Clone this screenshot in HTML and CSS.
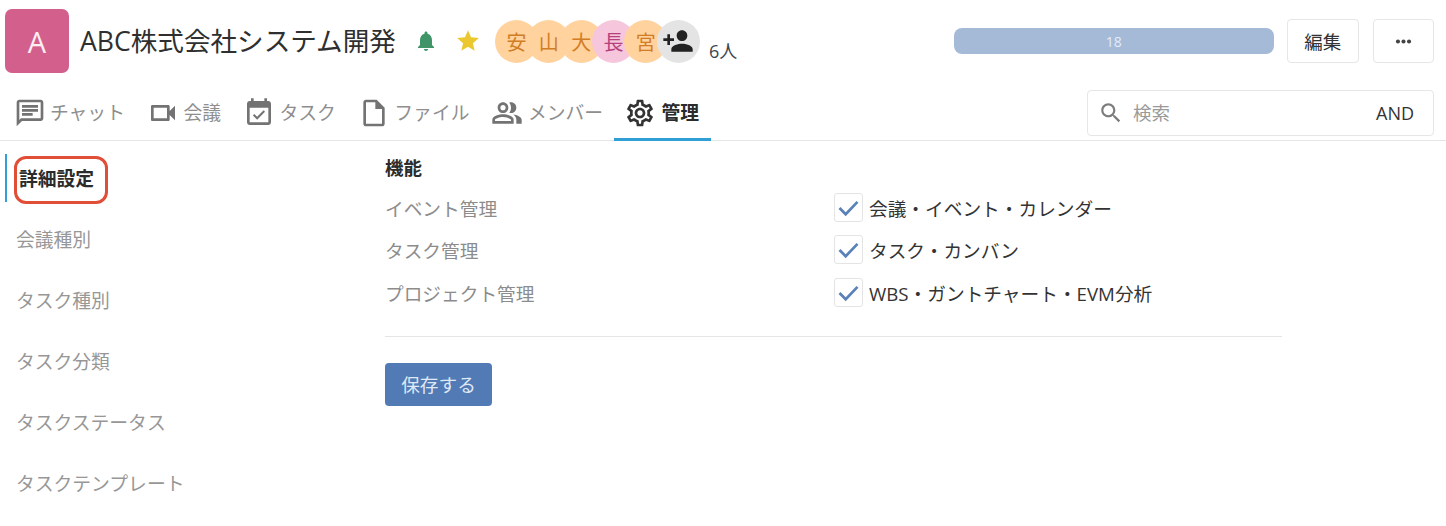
FILE: index.html
```html
<!DOCTYPE html>
<html lang="ja">
<head>
<meta charset="utf-8">
<title>ABC株式会社システム開発</title>
<link rel="stylesheet" href="styles.css">
</head>
<body>
<header class="head">
  <div class="logo">A</div>
  <h1 class="title">ABC株式会社システム開発</h1>
  <svg class="ic bell" viewBox="0 0 24 24"><path d="M12 22c1.1 0 2-.9 2-2h-4c0 1.1.89 2 2 2zm6-6v-5c0-3.07-1.64-5.64-4.5-6.32V4c0-.83-.67-1.5-1.5-1.5s-1.5.67-1.5 1.5v.68C7.63 5.36 6 7.92 6 11v5l-2 2v1h16v-1l-2-2z"/></svg>
  <svg class="ic star" viewBox="0 0 24 24"><path d="M12 17.27L18.18 21l-1.64-7.03L22 9.24l-7.19-.61L12 2 9.19 8.63 2 9.24l5.46 4.73L5.82 21z"/></svg>
  <div class="avatars">
    <span class="av orange">安</span>
    <span class="av orange">山</span>
    <span class="av orange">大</span>
    <span class="av pink">長</span>
    <span class="av orange">宮</span>
    <span class="av gray"><svg class="ic add" viewBox="0 0 24 24"><path d="M15 12c2.21 0 4-1.79 4-4s-1.79-4-4-4-4 1.79-4 4 1.79 4 4 4zm-9-2V7H4v3H1v2h3v3h2v-3h3v-2H6zm9 4c-2.67 0-8 1.34-8 4v2h16v-2c0-2.66-5.33-4-8-4z"/></svg></span>
  </div>
  <span class="count">6人</span>
  <div class="progress">18</div>
  <button class="btn edit">編集</button>
  <button class="btn more"><svg class="ic dots" viewBox="0 0 24 24"><circle cx="5" cy="12" r="2.6"/><circle cx="12" cy="12" r="2.6"/><circle cx="19" cy="12" r="2.6"/></svg></button>
</header>

<nav class="nav">
  <a class="tab"><svg class="ic" viewBox="0 0 24 24"><path d="M20 2H4c-1.1 0-2 .9-2 2v18l4-4h14c1.1 0 2-.9 2-2V4c0-1.1-.9-2-2-2zm0 14H5.17L4 17.17V4h16v12zM6 12h8v2H6zm0-3h12v2H6zm0-3h12v2H6z"/></svg><span>チャット</span></a>
  <a class="tab"><svg class="ic" viewBox="0 0 24 24"><path d="M15 8v8H5V8h10m1-2H4c-.55 0-1 .45-1 1v10c0 .55.45 1 1 1h12c.55 0 1-.45 1-1v-3.5l4 4v-11l-4 4V7c0-.55-.45-1-1-1z"/></svg><span>会議</span></a>
  <a class="tab"><svg class="ic" viewBox="0 0 24 24"><path d="M16.53 11.06L15.47 10l-4.88 4.88-2.12-2.12-1.06 1.06L10.59 17l5.94-5.94zM19 3h-1V1h-2v2H8V1H6v2H5c-1.11 0-1.99.9-1.99 2L3 19c0 1.1.89 2 2 2h14c1.1 0 2-.9 2-2V5c0-1.1-.9-2-2-2zm0 16H5V8h14v11z"/></svg><span>タスク</span></a>
  <a class="tab"><svg class="ic" viewBox="0 0 24 24"><path d="M14 2H6c-1.1 0-1.99.9-1.99 2L4 20c0 1.1.89 2 1.99 2H18c1.1 0 2-.9 2-2V8l-6-6zM6 20V4h7v5h5v11H6z"/></svg><span>ファイル</span></a>
  <a class="tab"><svg class="ic" viewBox="0 0 24 24"><path d="M16.67 13.13C18.04 14.06 19 15.32 19 17v3h4v-3c0-2.18-3.57-3.47-6.33-3.87zM15 12c2.21 0 4-1.79 4-4s-1.79-4-4-4c-.47 0-.91.1-1.33.24C14.5 5.27 15 6.58 15 8s-.5 2.73-1.33 3.76c.42.14.86.24 1.33.24zM9 12c2.21 0 4-1.79 4-4s-1.79-4-4-4-4 1.79-4 4 1.79 4 4 4zm0-6c1.1 0 2 .9 2 2s-.9 2-2 2-2-.9-2-2 .9-2 2-2zM9 13c-2.67 0-8 1.34-8 4v3h16v-3c0-2.66-5.33-4-8-4zm6 5H3v-.99C3.2 16.29 6.3 15 9 15s5.8 1.29 6 2z"/></svg><span>メンバー</span></a>
  <a class="tab active"><svg class="ic" viewBox="0 0 24 24"><path d="M19.43 12.98c.04-.32.07-.64.07-.98 0-.34-.03-.66-.07-.98l2.11-1.65c.19-.15.24-.42.12-.64l-2-3.46c-.09-.16-.26-.25-.44-.25-.06 0-.12.01-.17.03l-2.49 1c-.52-.4-1.08-.73-1.69-.98l-.38-2.65C14.46 2.18 14.25 2 14 2h-4c-.25 0-.46.18-.49.42l-.38 2.65c-.61.25-1.17.59-1.69.98l-2.49-1c-.06-.02-.12-.03-.18-.03-.17 0-.34.09-.43.25l-2 3.46c-.13.22-.07.49.12.64l2.11 1.65c-.04.32-.07.65-.07.98 0 .33.03.66.07.98l-2.11 1.65c-.19.15-.24.42-.12.64l2 3.46c.09.16.26.25.44.25.06 0 .12-.01.17-.03l2.49-1c.52.4 1.08.73 1.69.98l.38 2.65c.03.24.24.42.49.42h4c.25 0 .46-.18.49-.42l.38-2.65c.61-.25 1.17-.59 1.69-.98l2.49 1c.06.02.12.03.18.03.17 0 .34-.09.43-.25l2-3.46c.12-.22.07-.49-.12-.64l-2.11-1.65zm-1.98-1.71c.04.31.05.52.05.73 0 .21-.02.43-.05.73l-.14 1.13.89.7 1.08.84-.7 1.21-1.27-.51-1.04-.42-.9.68c-.43.32-.84.56-1.25.73l-1.06.43-.16 1.13-.2 1.35h-1.4l-.19-1.35-.16-1.13-1.06-.43c-.43-.18-.83-.41-1.23-.71l-.91-.7-1.06.43-1.27.51-.7-1.21 1.08-.84.89-.7-.14-1.13c-.03-.31-.05-.54-.05-.74s.02-.43.05-.73l.14-1.13-.89-.7-1.08-.84.7-1.21 1.27.51 1.04.42.9-.68c.43-.32.84-.56 1.25-.73l1.06-.43.16-1.13.2-1.35h1.39l.19 1.35.16 1.13 1.06.43c.43.18.83.41 1.23.71l.91.7 1.06-.43 1.27-.51.7 1.21-1.07.85-.89.7.14 1.13zM12 8c-2.21 0-4 1.79-4 4s1.79 4 4 4 4-1.79 4-4-1.79-4-4-4zm0 6c-1.1 0-2-.9-2-2s.9-2 2-2 2 .9 2 2-.9 2-2 2z"/></svg><span>管理</span></a>
  <div class="search">
    <svg class="ic lens" viewBox="0 0 24 24"><path d="M15.5 14h-.79l-.28-.27C15.41 12.59 16 11.11 16 9.5 16 5.91 13.09 3 9.5 3S3 5.91 3 9.5 5.91 16 9.5 16c1.61 0 3.09-.59 4.23-1.57l.27.28v.79l5 4.99L20.49 19l-4.99-5zm-6 0C7.01 14 5 11.99 5 9.5S7.01 5 9.5 5 14 7.01 14 9.5 11.99 14 9.5 14z"/></svg>
    <span class="ph">検索</span>
    <span class="and">AND</span>
  </div>
</nav>

<main class="body">
  <aside class="side">
    <a class="side-item current">詳細設定<span class="mark"></span></a>
    <a class="side-item">会議種別</a>
    <a class="side-item">タスク種別</a>
    <a class="side-item">タスク分類</a>
    <a class="side-item">タスクステータス</a>
    <a class="side-item">タスクテンプレート</a>
  </aside>
  <section class="panel">
    <h2 class="heading">機能</h2>
    <div class="row">
      <span class="label">イベント管理</span>
      <span class="check"><svg class="tick" viewBox="0 0 24 24"><path d="M4 12.5l5.5 5.5L20 7"/></svg></span>
      <span class="opt">会議・イベント・カレンダー</span>
    </div>
    <div class="row">
      <span class="label">タスク管理</span>
      <span class="check"><svg class="tick" viewBox="0 0 24 24"><path d="M4 12.5l5.5 5.5L20 7"/></svg></span>
      <span class="opt">タスク・カンバン</span>
    </div>
    <div class="row">
      <span class="label">プロジェクト管理</span>
      <span class="check"><svg class="tick" viewBox="0 0 24 24"><path d="M4 12.5l5.5 5.5L20 7"/></svg></span>
      <span class="opt">WBS・ガントチャート・EVM分析</span>
    </div>
    <hr class="rule">
    <button class="save">保存する</button>
  </section>
</main>
</body>
</html>
```
FILE: styles.css
```css
* { box-sizing: border-box; }
html, body { margin: 0; padding: 0; }
body {
  width: 1446px;
  height: 526px;
  overflow: hidden;
  background: #fff;
  color: #333;
  font-family: "Open Sans", "Noto Sans CJK JP", sans-serif;
}
.ic { display: block; fill: currentColor; flex: none; }

/* header */
.head { display: flex; align-items: center; height: 82px; padding-left: 5px; }
.logo {
  width: 64px; height: 64px; border-radius: 7px;
  background: #d25f8c; color: #fdeef3;
  display: flex; align-items: center; justify-content: center;
  font-size: 29px; flex: none;
}
.title { margin: 0 0 0 11px; font-size: 26.6px; font-weight: 400; color: #2f2f2f; white-space: nowrap; width: 316px; line-height: 34px; flex: none; }
.bell { width: 24px; height: 24px; color: #3f9468; margin-left: 18px; }
.star { width: 26px; height: 26px; color: #ebc830; margin-left: 17px; }
.avatars { display: flex; margin-left: 14px; }
.av {
  width: 43px; height: 43px; border-radius: 50%;
  display: flex; align-items: center; justify-content: center;
  font-size: 20px; flex: none; margin-right: -10.7px;
}
.orange { background: #ffd29e; color: #d17d25; }
.pink { background: #f6c6dc; color: #b5427c; }
.gray { background: #e4e4e4; color: #222; }
.add { width: 32px; height: 32px; }
.count { margin: 18px 0 0 20px; font-size: 18px; color: #3a4652; white-space: nowrap; width: 28px; }
.progress {
  margin-left: 217px; width: 320px; height: 26px; border-radius: 8px;
  background: #a5bad7; color: #e4ebf5; font-size: 14px;
  display: flex; align-items: center; justify-content: center;
}
.btn {
  height: 44px; background: #fff; border: 1px solid #e6e6e6; border-radius: 4px;
  display: flex; align-items: center; justify-content: center;
  font: inherit; font-size: 18.5px; color: #333; padding: 0; flex: none;
}
.edit { width: 72px; margin-left: 13px; }
.more { width: 61px; margin-left: 14px; }
.dots { width: 19px; height: 19px; color: #444; }

/* nav */
.nav {
  display: flex; align-items: flex-end; height: 59px; padding-left: 3.5px;
  border-bottom: 1px solid #e5e5e5;
}
.tab {
  display: flex; align-items: center; gap: 6.5px; height: 58px;
  padding: 2px 12px 0; font-size: 18.8px; color: #8e8e8e; white-space: nowrap;
  border-bottom: 3px solid transparent; margin-bottom: -1px;
}
.tab .ic { width: 32px; height: 32px; color: #737373; margin: 2px -2px 0; }
.tab.active { color: #2b2b2b; font-weight: 700; border-bottom-color: #2f9fd6; margin-left: -1.5px; gap: 8px; }
.tab.active .ic { color: #333; }
.search {
  margin: 0 12px 4px auto; width: 347px; height: 46px;
  border: 1px solid #e6e6e6; border-radius: 4px;
  display: flex; align-items: center; padding: 0 19px 0 10px;
}
.lens { width: 26px; height: 26px; color: #7d7d7d; }
.ph { margin-left: 9px; padding-bottom: 2px; font-size: 18.5px; color: #9a9a9a; }
.and { margin-left: auto; font-size: 18px; color: #333; }

/* body */
.body { display: flex; }
.side { width: 385px; flex: none; padding: 13px 0 0 5px; }
.side-item {
  display: flex; align-items: center; height: 48px; margin-bottom: 13px;
  padding: 0 0 0 11px; font-size: 18.8px; color: #979797; position: relative; white-space: nowrap;
}
.side-item.current {
  border-left: 2px solid #2f9fd6; padding: 0 0 1px 12px;
  color: #2b2b2b; font-weight: 700;
}
.mark {
  position: absolute; left: 7px; top: 2px; width: 94px; height: 48px;
  border: 3px solid #e04e37; border-radius: 12px;
}
.panel { width: 897px; padding-top: 13px; }
.heading { margin: 0 0 5px; font-size: 18.5px; font-weight: 700; line-height: 27px; color: #2b2b2b; }
.row { display: flex; align-items: center; height: 42.5px; }
.label { width: 449px; font-size: 18.7px; color: #8c8c8c; white-space: nowrap; }
.check {
  width: 29px; height: 29px; border: 1px solid #e4e4e4; border-radius: 3px;
  display: flex; align-items: center; justify-content: center; flex: none;
}
.tick { width: 27px; height: 27px; fill: none; stroke: #5b82b8; stroke-width: 2.4; }
.opt { margin-left: 6px; font-size: 18.7px; color: #333; white-space: nowrap; }
.rule { margin: 22px 0 26px; border: 0; border-top: 1px solid #e5e5e5; }
.save {
  display: block; width: 107px; height: 43px; padding: 0 0 2px;
  background: #527ab4; color: #dfe8f5; border: 0; border-radius: 4px;
  font: inherit; font-size: 18.7px;
}
```
